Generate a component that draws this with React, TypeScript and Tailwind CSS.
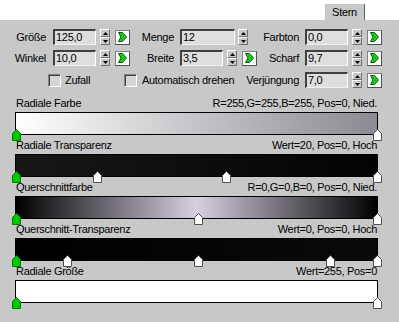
import React from "react";

const Field = ({ value, w }: { value: string; w: string }) => (
  <div
    className={`h-4 ${w} border-t-2 border-l-2 border-t-[#404040] border-l-[#404040] border-r border-b border-r-white border-b-[#f0f0f0] bg-[#dedede] pl-[1px] text-[11px] leading-[12px]`}
  >
    {value}
  </div>
);

const Spinner = () => (
  <div className="flex h-4 w-[10px] flex-col bg-[#c8c8c8]">
    <div className="flex flex-1 items-center justify-center border-t border-l border-t-white border-l-white border-r border-b border-r-[#707070] border-b-[#707070]">
      <svg width="5" height="3" viewBox="0 0 5 3">
        <polygon points="2.5,0 5,3 0,3" fill="#000" />
      </svg>
    </div>
    <div className="flex flex-1 items-center justify-center border-t border-l border-t-white border-l-white border-r border-b border-r-[#707070] border-b-[#707070]">
      <svg width="5" height="3" viewBox="0 0 5 3">
        <polygon points="0,0 5,0 2.5,3" fill="#000" />
      </svg>
    </div>
  </div>
);

const KeyBtn = () => (
  <div className="flex h-[15px] w-[15px] items-center justify-center border border-t-[#808080] border-l-[#808080] border-r-[#505050] border-b-[#505050] bg-white">
    <svg width="9" height="10" viewBox="0 0 9 10">
      <polygon points="0.5,0.5 4.5,0.5 8.5,5 4.5,9.5 0.5,9.5 3,5" fill="#22d822" stroke="#005a00" strokeWidth="1" />
      <circle cx="3.5" cy="3" r="0.6" fill="#005a00" />
      <circle cx="5.5" cy="5" r="0.6" fill="#005a00" />
      <circle cx="3.5" cy="7" r="0.6" fill="#005a00" />
    </svg>
  </div>
);

const Check = () => (
  <div className="h-[13px] w-[13px] border-t border-l border-t-[#808080] border-l-[#808080] border-r border-b border-r-white border-b-white bg-[#d6d6d6] shadow-[inset_1px_1px_0_#404040]" />
);

const Marker = ({ left, green }: { left: number; green?: boolean }) => (
  <svg
    width="9"
    height="12"
    viewBox="0 0 9 12"
    className="absolute top-[16px]"
    style={{ left }}
  >
    <polygon
      points="0.5,4.5 4.5,0.5 8.5,4.5 8.5,11.5 0.5,11.5"
      fill={green ? "#00c800" : "#ffffff"}
      stroke={green ? "#007a00" : "#505050"}
      strokeWidth="1"
    />
  </svg>
);

const sections = [
  {
    name: "Radiale Farbe",
    info: "R=255,G=255,B=255, Pos=0, Nied.",
    bg: "bg-[linear-gradient(to_right,#ffffff,#8a8a92)]",
    marks: [] as number[],
  },
  {
    name: "Radiale Transparenz",
    info: "Wert=20, Pos=0, Hoch",
    bg: "bg-[linear-gradient(to_right,#171717,#030303)]",
    marks: [77, 206],
  },
  {
    name: "Querschnittfarbe",
    info: "R=0,G=0,B=0, Pos=0, Nied.",
    bg: "bg-[linear-gradient(to_right,#000000,#d8d0e2_50%,#000000)]",
    marks: [178],
  },
  {
    name: "Querschnitt-Transparenz",
    info: "Wert=0, Pos=0, Hoch",
    bg: "bg-[linear-gradient(to_right,#000000,#0a0a0a)]",
    marks: [47, 178, 310],
  },
  {
    name: "Radiale Größe",
    info: "Wert=255, Pos=0",
    bg: "bg-white",
    marks: [] as number[],
  },
];

export default function App() {
  return (
    <div className="h-[322px] w-[399px] overflow-hidden bg-white font-['Liberation_Sans',Arial,sans-serif] text-[11px] tracking-[-0.3px] text-black">
      <div className="flex h-5 items-end justify-end pr-[34px]">
        <div className="flex h-[17px] w-[41px] items-center justify-center rounded-t-[2px] border-t border-l border-r border-t-white border-l-white border-r-[#606060] bg-[#c8c8c8] leading-[13px]">
          Stern
        </div>
      </div>

      <div className="h-[302px] bg-[#c8c8c8] pt-[9px]">
        {/* row 1 */}
        <div className="flex h-4 items-center">
          <div className="w-[46px] text-right">Größe</div>
          <div className="ml-[7px]"><Field value="125,0" w="w-[43px]" /></div>
          <div className="ml-[4px]"><Spinner /></div>
          <div className="ml-[5px]"><KeyBtn /></div>
          <div className="w-[44px] text-right">Menge</div>
          <div className="ml-[6px]"><Field value="12" w="w-[55px]" /></div>
          <div className="ml-[3px]"><Spinner /></div>
          <div className="w-[51px] text-right">Farbton</div>
          <div className="ml-[6px]"><Field value="0,0" w="w-[43px]" /></div>
          <div className="ml-[4px]"><Spinner /></div>
          <div className="ml-[5px]"><KeyBtn /></div>
        </div>

        {/* row 2 */}
        <div className="mt-[5px] flex h-4 items-center">
          <div className="w-[46px] text-right">Winkel</div>
          <div className="ml-[7px]"><Field value="10,0" w="w-[43px]" /></div>
          <div className="ml-[4px]"><Spinner /></div>
          <div className="ml-[5px]"><KeyBtn /></div>
          <div className="w-[44px] text-right">Breite</div>
          <div className="ml-[6px]"><Field value="3,5" w="w-[43px]" /></div>
          <div className="ml-[4px]"><Spinner /></div>
          <div className="ml-[5px]"><KeyBtn /></div>
          <div className="w-[42px] text-right">Scharf</div>
          <div className="ml-[6px]"><Field value="9,7" w="w-[43px]" /></div>
          <div className="ml-[4px]"><Spinner /></div>
          <div className="ml-[5px]"><KeyBtn /></div>
        </div>

        {/* row 3 */}
        <div className="mt-[6px] flex h-4 items-center pl-[48px]">
          <div className="flex w-[76px] items-center gap-[4px]">
            <Check />
            <span>Zufall</span>
          </div>
          <div className="flex w-[114px] items-center gap-[5px]">
            <Check />
            <span className="whitespace-nowrap">Automatisch drehen</span>
          </div>
          <div className="w-[61px] text-right">Verjüngung</div>
          <div className="ml-[6px]"><Field value="7,0" w="w-[43px]" /></div>
          <div className="ml-[4px]"><Spinner /></div>
          <div className="ml-[5px]"><KeyBtn /></div>
        </div>

        {/* gradients */}
        <div className="mt-[8px] ml-[15px] w-[363px]">
          {sections.map((s) => (
            <div key={s.name} className="mb-[3px]">
              <div className="flex h-4 justify-between px-[1px] leading-[15px]">
                <span>{s.name}</span>
                <span>{s.info}</span>
              </div>
              <div className={`relative h-[23px] border border-black ${s.bg}`}>
                <Marker left={-4} green />
                {s.marks.map((m) => (
                  <Marker key={m} left={m} />
                ))}
                <Marker left={357} />
              </div>
            </div>
          ))}
        </div>
      </div>
    </div>
  );
}
